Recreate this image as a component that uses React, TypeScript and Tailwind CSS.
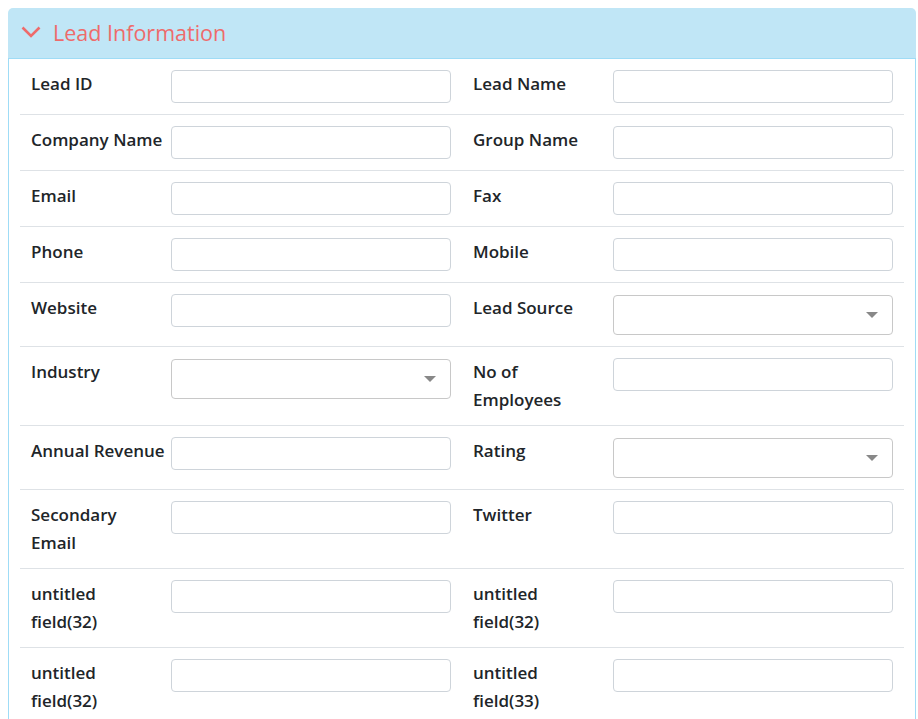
type Field = {
  label: string;
  select?: boolean;
};

// labels wrap where the original layout wraps them
const rows: [Field, Field][] = [
  [{ label: "Lead ID" }, { label: "Lead Name" }],
  [{ label: "Company Name" }, { label: "Group Name" }],
  [{ label: "Email" }, { label: "Fax" }],
  [{ label: "Phone" }, { label: "Mobile" }],
  [{ label: "Website" }, { label: "Lead Source", select: true }],
  [{ label: "Industry", select: true }, { label: "No of\nEmployees" }],
  [{ label: "Annual Revenue" }, { label: "Rating", select: true }],
  [{ label: "Secondary\nEmail" }, { label: "Twitter" }],
  [{ label: "untitled\nfield(32)" }, { label: "untitled\nfield(32)" }],
  [{ label: "untitled\nfield(32)" }, { label: "untitled\nfield(33)" }],
];

const FieldCell = ({ label, select }: Field) => {
  return (
    <div className="flex w-1/2 px-[11px]">
      <label className="w-[140px] shrink-0 whitespace-pre text-[17px] leading-[28px] font-semibold text-[#212529]">
        {label}
      </label>
      {select ? (
        <div className="relative mt-px h-[40px] w-[280px] rounded-[4px] border border-[#c8c8c8] bg-white">
          <span className="absolute right-[14px] top-[16px] h-0 w-0 border-x-[6px] border-t-[6px] border-x-transparent border-t-[#888]" />
        </div>
      ) : (
        <input
          type="text"
          className="h-[33px] w-[280px] rounded-[4px] border border-[#ced4da] bg-white px-3 outline-none"
        />
      )}
    </div>
  );
};

export default function App() {
  return (
    <div
      className="min-h-screen bg-white pl-2 pt-2"
      style={{ fontFamily: '"Open Sans", "Noto Sans", sans-serif' }}
    >
      <div className="w-[908px]">
        <div className="flex h-[50px] items-center rounded-t-[5px] bg-[#c0e6f6] pl-[13px]">
          <svg width="20" height="12" viewBox="0 0 20 12" className="mb-[3px]">
            <polyline
              points="1.5,1.5 10,10 18.5,1.5"
              fill="none"
              stroke="#ee6b6b"
              strokeWidth="2.6"
            />
          </svg>
          <span className="ml-[12px] text-[21.5px] text-[#ee6b6b]">Lead Information</span>
        </div>
        <div className="border border-t-[#9fdcf6] border-x-[#9fdcf6] border-b-0 px-[11px]">
          {rows.map((row, i) => (
            <div key={i} className="flex border-b border-[#dee2e6] pt-[11px] pb-[11px]">
              <FieldCell {...row[0]} />
              <FieldCell {...row[1]} />
            </div>
          ))}
        </div>
      </div>
    </div>
  );
}
